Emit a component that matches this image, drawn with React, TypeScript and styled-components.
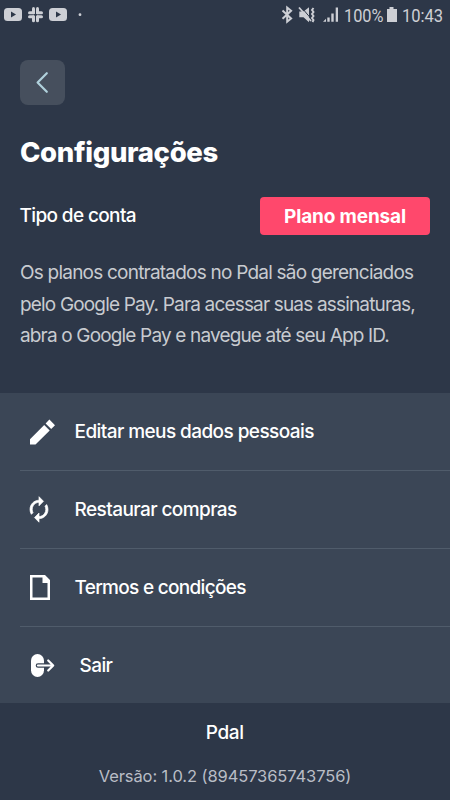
import React from 'react';
import styled, { createGlobalStyle } from 'styled-components';

const Global = createGlobalStyle`
  * { box-sizing: border-box; }
  html, body { margin: 0; padding: 0; background: #2d3748; }
  body { font-family: Inter, "Liberation Sans", sans-serif; color: #fff; overflow: hidden; }
`;

const Screen = styled.main`
  width: 450px;
  height: 800px;
  display: flex;
  flex-direction: column;
  background: #2d3748;
  overflow: hidden;
`;

const StatusBar = styled.header`
  height: 30px;
  flex: none;
  display: flex;
  justify-content: space-between;
  color: #cdcfd5;
`;

const StatusIcons = styled.svg`
  display: block;
  flex: none;
  fill: currentColor;
`;

const StatusGroup = styled.div`
  display: flex;
  align-items: flex-start;
`;

const StatusText = styled.span<{ $width: number; $gap: number; $scale: number }>`
  width: ${p => p.$width}px;
  margin-left: ${p => p.$gap}px;
  font: 400 19px/31px Roboto, sans-serif;
  white-space: nowrap;
  transform: scaleX(${p => p.$scale});
  transform-origin: left center;
`;

const Account = styled.section`
  height: 363px;
  flex: none;
  padding: 30px 20px 0;
`;

const BackButton = styled.button`
  display: flex;
  width: 45px;
  height: 45px;
  padding: 0;
  border: 0;
  border-radius: 8px;
  background: #464f5d;
`;

const Title = styled.h1`
  margin: 29px 0 0;
  font-size: 27.5px;
  line-height: 36px;
  font-weight: 800;
  letter-spacing: -0.33px;
`;

const PlanRow = styled.div`
  margin-top: 27px;
  height: 38px;
  display: flex;
  align-items: center;
  justify-content: space-between;
`;

const Label = styled.span<{ $spacing?: number }>`
  margin-left: -0.5px;
  font-size: 19px;
  line-height: 28px;
  font-weight: 500;
  letter-spacing: ${p => p.$spacing ?? -0.58}px;
  white-space: nowrap;
`;

const PlanBadge = styled.span`
  width: 170px;
  height: 38px;
  border-radius: 4px;
  background: #ff486c;
  font-size: 19px;
  line-height: 39px;
  font-weight: 700;
  letter-spacing: -0.15px;
  text-align: center;
`;

const Description = styled.p`
  margin: 22px 0 0;
  color: #c8cbd0;
  font-size: 19px;
  line-height: 31.7px;
  font-weight: 400;
  white-space: nowrap;
`;

const Line = styled.span<{ $spacing: number }>`
  display: block;
  letter-spacing: ${p => p.$spacing}px;
`;

const Menu = styled.nav`
  height: 310px;
  flex: none;
  padding-left: 20px;
  background: #3b4656;
`;

const MenuItem = styled.div<{ $gap?: number }>`
  height: 78px;
  display: flex;
  align-items: center;
  gap: ${p => p.$gap ?? 15}px;
  border-bottom: 1px solid #505c6b;
  &:last-child { border-bottom: 0; height: 77px; }
`;

const MenuIcon = styled.svg`
  display: block;
  flex: none;
  width: 40px;
  height: 40px;
  fill: #fff;
`;

const Footer = styled.footer`
  flex: 1;
  display: flex;
  flex-direction: column;
  align-items: center;
  padding-top: 16px;
`;

const Version = styled.span`
  margin-top: 17px;
  color: #b9bdc6;
  font-size: 16.5px;
  line-height: 24px;
  letter-spacing: -0.1px;
  white-space: nowrap;
`;

export default function App() {
  return (
    <Screen>
      <Global />
      <StatusBar>
        <StatusIcons width="90" height="30">
          <rect x="4" y="8" width="18" height="13" rx="3.5" />
          <path d="M11 11.5v6l5-3z" fill="#2d3748" />
          <g>
            <rect x="32" y="7" width="3" height="7.2" rx="1.5" />
            <rect x="36" y="7" width="3" height="7.2" rx="1.5" />
            <rect x="32" y="15.2" width="3" height="7" rx="1.5" />
            <rect x="36" y="15.2" width="3" height="7" rx="1.5" />
            <rect x="28" y="11.2" width="7" height="3" rx="1.5" />
            <rect x="36" y="11.2" width="7" height="3" rx="1.5" />
            <rect x="28" y="15.2" width="7" height="3" rx="1.5" />
            <rect x="36" y="15.2" width="7" height="3" rx="1.5" />
          </g>
          <rect x="49" y="8" width="18" height="13" rx="3.5" />
          <path d="M56 11.5v6l5-3z" fill="#2d3748" />
          <circle cx="80" cy="14.7" r="1.4" />
        </StatusIcons>
        <StatusGroup>
          <StatusIcons width="62" height="30" viewBox="278 0 62 30">
            <path d="M281.5 10.5l8.6 8-3.9 3.2V7.5l3.9 3.2-8.6 8" fill="none" stroke="currentColor" strokeWidth="2" />
            <path d="M298.3 11.5h4.2l5.5-4.3v15l-5.5-5h-4.2z" />
            <path d="M299.8 6.5l10.5 12.5" fill="none" stroke="#2d3748" strokeWidth="1" />
            <path d="M298 7.5l12 13.5" fill="none" stroke="currentColor" strokeWidth="1.8" />
            <path d="M312.5 8l-1.5 2 1.5 2-1.5 2 1.5 2-1.5 2 1.5 2-1 2" fill="none" stroke="currentColor" strokeWidth="1.9" />
            <path d="M322 21.8l3-3v3zM326.3 17.5h2.4v4.3h-2.4zM330.3 13.5h2.4v8.3h-2.4zM334.7 7.5h2.3v14.3h-2.3z" />
          </StatusIcons>
          <StatusText $width={41} $gap={3} $scale={0.86}>100%</StatusText>
          <StatusIcons width="14" height="30" viewBox="385 0 14 30">
            <path d="M389.5 7h4v2h3.5v13h-10V9h2.5z" />
          </StatusIcons>
          <StatusText $width={48} $gap={3} $scale={0.87}>10:43</StatusText>
        </StatusGroup>
      </StatusBar>

      <Account>
        <BackButton aria-label="Voltar">
          <svg width="45" height="45" fill="none" stroke="#b0d1dc" strokeWidth="2.2" strokeLinecap="round" strokeLinejoin="round">
            <path d="M26.8 13.2L17.6 22.5L26.8 31.8" />
          </svg>
        </BackButton>
        <Title>Configurações</Title>
        <PlanRow>
          <Label $spacing={-0.63}>Tipo de conta</Label>
          <PlanBadge>Plano mensal</PlanBadge>
        </PlanRow>
        <Description>
          <Line $spacing={-0.78}>Os planos contratados no Pdal são gerenciados</Line>
          <Line $spacing={-0.83}>pelo Google Pay. Para acessar suas assinaturas,</Line>
          <Line $spacing={-0.84}>abra o Google Pay e navegue até seu App ID.</Line>
        </Description>
      </Account>

      <Menu>
        <MenuItem>
          <MenuIcon viewBox="20 412 40 40">
            <path d="M30 439.2V444.5H35.5L49.7 430.4 44.2 424.9zM51.2 429L55 425.2 49.4 419.4 45.6 423.4z" />
          </MenuIcon>
          <Label>Editar meus dados pessoais</Label>
        </MenuItem>
        <MenuItem>
          <MenuIcon viewBox="20 490 40 40">
            <path stroke="#fff" strokeWidth="0.7" transform="translate(27 497.2) scale(1 1.02)" d="M12 5v3.5l4.5-4.5L12-.5V3C7 3 3 7 3 12c0 1.8.5 3.4 1.4 4.8L6 15.2A7 7 0 0 1 12 5zm7.6 2.2L18 8.8A7 7 0 0 1 12 19v-3.5L7.5 20l4.5 4.5V21c5 0 9-4 9-9 0-1.8-.5-3.4-1.4-4.8z" />
          </MenuIcon>
          <Label>Restaurar compras</Label>
        </MenuItem>
        <MenuItem>
          <MenuIcon viewBox="20 568 40 40">
            <path fillRule="evenodd" d="M30 575h15l5 5v20H30zM32.5 577.5v20h15V583h-5v-5.5z" />
          </MenuIcon>
          <Label $spacing={-0.7}>Termos e condições</Label>
        </MenuItem>
        <MenuItem $gap={20}>
          <MenuIcon viewBox="20 646 40 40">
            <rect x="31" y="654" width="13" height="23" rx="6.5" />
            <path d="M38 665.5h15M48.2 660.5l5 5-5 5" fill="none" stroke="#3b4656" strokeWidth="4.6" strokeLinecap="round" />
            <path d="M38 665.5h15M48.2 660.5l5 5-5 5" fill="none" stroke="#fff" strokeWidth="2.2" strokeLinecap="round" strokeLinejoin="round" />
          </MenuIcon>
          <Label>Sair</Label>
        </MenuItem>
      </Menu>

      <Footer>
        <Label $spacing={-0.4}>Pdal</Label>
        <Version>Versão: 1.0.2 (89457365743756)</Version>
      </Footer>
    </Screen>
  );
}
